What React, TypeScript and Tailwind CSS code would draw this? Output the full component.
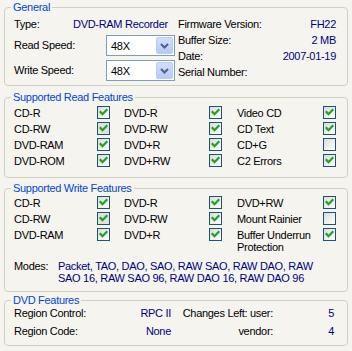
import type { ReactNode } from "react";

const navy = "text-[#000080]";

function Group({ title, className, children }: { title: string; className?: string; children: ReactNode }) {
  return (
    <fieldset className={`rounded-[4px] border border-[#d0d0bf] pl-[9px] pr-[10px] ${className ?? ""}`}>
      <legend className="ml-[-3px] px-[2px] leading-[14px] text-[#0046d5]">{title}</legend>
      {children}
    </fieldset>
  );
}

function Check({ on, dim }: { on: boolean; dim?: boolean }) {
  return (
    <div
      className={`mt-[1px] h-[13px] w-[13px] shrink-0 border border-[#1c5180] ${
        dim ? "bg-[#e2e2dc]" : "bg-gradient-to-br from-[#dcdcd7] to-white"
      }`}
    >
      {on && (
        <svg width="11" height="11" viewBox="0 0 11 11">
          <path d="M2.5 5 L4.5 7.2 L8.5 3" fill="none" stroke="#21a121" strokeWidth="2.2" strokeLinecap="square" />
        </svg>
      )}
    </div>
  );
}

function Combo() {
  return (
    <div className="flex h-[21px] w-[69px] items-center justify-between border border-[#7f9db9] bg-white pl-[4px] pr-[1px]">
      <span className="leading-[14px]">48X</span>
      <div className="flex h-[17px] w-[17px] items-center justify-center rounded-[2px] border border-[#b9ccf6] bg-gradient-to-b from-[#d2defc] to-[#b6caf7]">
        <svg width="9" height="6" viewBox="0 0 9 6">
          <path d="M1 1 L4.5 4.5 L8 1" fill="none" stroke="#4d6185" strokeWidth="2" />
        </svg>
      </div>
    </div>
  );
}

type Feat = [string, boolean, boolean?];

function FeatRow({ items, multi }: { items: Feat[]; multi?: boolean }) {
  const widths = ["w-[83px]", "w-[99px] pl-[14px]", "w-[101px] pl-[15px]"];
  return (
    <div className="flex items-start">
      {items.map(([label, on, dim], i) => (
        <div key={label} className="flex items-start">
          <div className={`${widths[i]} ${multi && i === 2 ? "pt-[2px] leading-[12px]" : "leading-[16px]"}`}>
            {label}
          </div>
          <Check on={on} dim={dim} />
        </div>
      ))}
    </div>
  );
}

export default function App() {
  return (
    <div className="h-[351px] w-[352px] bg-[#f5f4ef] px-[4px] font-['Liberation_Sans',Arial,sans-serif] text-[11px] tracking-[-0.3px] text-black">
      <Group title="General" className="pb-[4px]">
        <div className="flex">
          <div className="w-[164px]">
            <div className="mt-[3px] flex leading-[14px]">
              <span className="w-[59px]">Type:</span>
              <span className={navy}>DVD-RAM Recorder</span>
            </div>
            <div className="mt-[4px] flex items-center">
              <span className="w-[92px]">Read Speed:</span>
              <Combo />
            </div>
            <div className="mt-[4px] flex items-center">
              <span className="w-[92px]">Write Speed:</span>
              <Combo />
            </div>
          </div>
          <div className="mt-[2px] flex-1 pr-[1px] leading-[16px]">
            <div className="flex justify-between">
              <span>Firmware Version:</span>
              <span className={navy}>FH22</span>
            </div>
            <div className="flex justify-between">
              <span>Buffer Size:</span>
              <span className={navy}>2 MB</span>
            </div>
            <div className="flex justify-between">
              <span>Date:</span>
              <span className={navy}>2007-01-19</span>
            </div>
            <div>Serial Number:</div>
          </div>
        </div>
      </Group>

      <Group title="Supported Read Features" className="mt-[4px] pb-[8px]">
        <div className="mt-[1px]">
          <FeatRow items={[["CD-R", true], ["DVD-R", true], ["Video CD", true]]} />
          <FeatRow items={[["CD-RW", true, true], ["DVD-RW", true], ["CD Text", true]]} />
          <FeatRow items={[["DVD-RAM", true], ["DVD+R", true], ["CD+G", false]]} />
          <FeatRow items={[["DVD-ROM", true], ["DVD+RW", true], ["C2 Errors", true]]} />
        </div>
      </Group>

      <Group title="Supported Write Features" className="mt-[3px] pb-[7px]">
        <FeatRow items={[["CD-R", true], ["DVD-R", true], ["DVD+RW", true]]} />
        <FeatRow items={[["CD-RW", true, true], ["DVD-RW", true], ["Mount Rainier", false]]} />
        <FeatRow
          multi
          items={[["DVD-RAM", true], ["DVD+R", true], ["Buffer Underrun Protection", true]]}
        />
        <div className="mt-[7px] flex leading-[12px]">
          <span className="w-[44px] shrink-0">Modes:</span>
          <div className={navy}>
            <div>Packet, TAO, DAO, SAO, RAW SAO, RAW DAO, RAW</div>
            <div>SAO 16, RAW SAO 96, RAW DAO 16, RAW DAO 96</div>
          </div>
        </div>
      </Group>

      <Group title="DVD Features" className="mt-[1px] pb-[8px]">
        <div className="leading-[12px]">
          <div className="flex">
            <div className="flex w-[157px] justify-between">
              <span>Region Control:</span>
              <span className={navy}>RPC II</span>
            </div>
            <span className="w-[102px] whitespace-nowrap text-right">Changes Left: user:</span>
            <span className={`w-[61px] text-right ${navy}`}>5</span>
          </div>
          <div className="mt-[6px] flex">
            <div className="flex w-[157px] justify-between">
              <span>Region Code:</span>
              <span className={navy}>None</span>
            </div>
            <span className="w-[102px] whitespace-nowrap text-right">vendor:</span>
            <span className={`w-[61px] text-right ${navy}`}>4</span>
          </div>
        </div>
      </Group>
    </div>
  );
}
